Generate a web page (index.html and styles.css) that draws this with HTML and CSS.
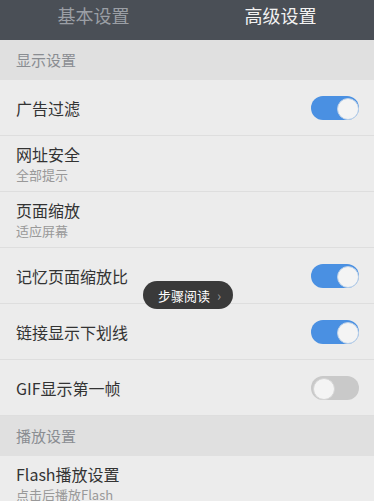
FILE: index.html
```html
<!DOCTYPE html>
<html>
<head>
    <link rel="stylesheet" href="styles.css">
</head>
<body>
<div class="tabs">
    <div class="tab">基本设置</div>
    <div class="tab active">高级设置</div>
</div>

<div class="section">显示设置</div>
<div class="row">
    <div class="title">广告过滤</div>
    <div class="switch on"></div>
</div>
<div class="row">
    <div>
        <div class="title">网址安全</div>
        <div class="sub">全部提示</div>
    </div>
</div>
<div class="row">
    <div>
        <div class="title">页面缩放</div>
        <div class="sub">适应屏幕</div>
    </div>
</div>
<div class="row">
    <div class="title">记忆页面缩放比</div>
    <div class="switch on"></div>
</div>
<div class="row">
    <div class="title">链接显示下划线</div>
    <div class="switch on"></div>
</div>
<div class="row">
    <div class="title">GIF显示第一帧</div>
    <div class="switch"></div>
</div>

<div class="section">播放设置</div>
<div class="row">
    <div>
        <div class="title">Flash播放设置</div>
        <div class="sub">点击后播放Flash</div>
    </div>
</div>

<div class="toast">步骤阅读 <span class="arrow">&#8250;</span></div>
</body>
</html>
```

FILE: styles.css
```css
*{
    margin: 0;
    padding: 0;
    box-sizing: border-box;
}
body {
    width: 374px;
    height: 501px;
    overflow: hidden;
    font-family: "Noto Sans CJK SC", "Noto Sans", sans-serif;
    background-color: #ececec;
    position: relative;
}

.tabs {
    display: flex;
    height: 40px;
    background: #4a4f56;
}

.tab {
    flex: 1;
    text-align: center;
    font-size: 18px;
    line-height: 30px;
    color: #9b9fa5;
    position: relative;
}

.tab.active {
    color: #f2f2f2;
}

.tab.active::after {
    content: "";
    position: absolute;
    left: 50%;
    bottom: -10px;
    margin-left: -6px;
    border: 6px solid transparent;
    border-bottom-color: #e0e0e0;
}

.section {
    height: 40px;
    line-height: 40px;
    padding-left: 16px;
    font-size: 15px;
    color: #8a8d92;
    background: #e0e0e0;
}

.row {
    height: 56px;
    padding: 0 15px 0 16px;
    display: flex;
    align-items: center;
    justify-content: space-between;
    border-bottom: 1px solid #dedede;
}

.title {
    font-size: 16px;
    color: #333;
    line-height: 22px;
}

.sub {
    font-size: 13px;
    color: #999;
    line-height: 19px;
}

.switch {
    width: 48px;
    height: 24px;
    border-radius: 12px;
    background: #c9c9c9;
    position: relative;
}

.switch::after {
    content: "";
    position: absolute;
    top: 2px;
    left: 2px;
    width: 20px;
    height: 20px;
    border-radius: 50%;
    background: #f4f4f4;
    border: 1px solid #d5d5d5;
}

.switch.on {
    background: #4a90e2;
}

.switch.on::after {
    left: 26px;
    border-color: #b9cfe8;
}

.toast {
    position: absolute;
    left: 143px;
    top: 281px;
    width: 90px;
    height: 28px;
    border-radius: 14px;
    background: #3a3a3a;
    color: #fff;
    font-size: 13px;
    line-height: 28px;
    padding-left: 15px;
}

.arrow {
    color: #999;
    margin-left: 4px;
    font-size: 14px;
}
```
